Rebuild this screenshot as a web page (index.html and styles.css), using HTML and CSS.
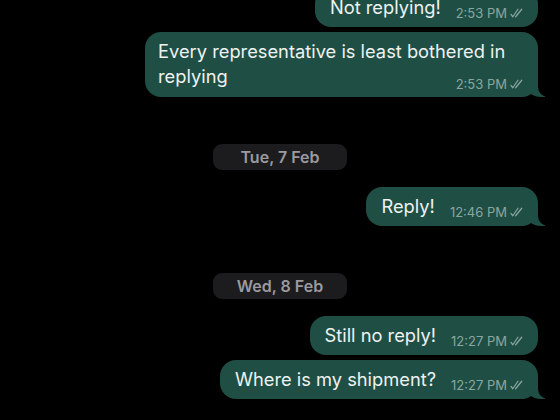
FILE: index.html
```html
<!DOCTYPE html>
<html lang="en">
<head>
    <meta charset="UTF-8">
    <meta name="viewport" content="width=device-width, initial-scale=1.0">
    <title>Chat</title>
    <link rel="stylesheet" href="styles.css">
</head>
<body>
    <div class="chat">
        <div class="bubble first">
            <span class="text">Not replying!</span>
            <span class="meta">2:53 PM <svg class="ticks" viewBox="0 0 16 10"><path d="M1 6.5l2 2.5L8.5 1M6 9l6.5-8"/></svg></span>
        </div>
        <div class="bubble multi tail">
            <span class="text">Every representative is least bothered in replying</span>
            <span class="meta">2:53 PM <svg class="ticks" viewBox="0 0 16 10"><path d="M1 6.5l2 2.5L8.5 1M6 9l6.5-8"/></svg></span>
        </div>

        <div class="date">Tue, 7 Feb</div>

        <div class="bubble tail">
            <span class="text">Reply!</span>
            <span class="meta">12:46 PM <svg class="ticks" viewBox="0 0 16 10"><path d="M1 6.5l2 2.5L8.5 1M6 9l6.5-8"/></svg></span>
        </div>

        <div class="date">Wed, 8 Feb</div>

        <div class="bubble">
            <span class="text">Still no reply!</span>
            <span class="meta">12:27 PM <svg class="ticks" viewBox="0 0 16 10"><path d="M1 6.5l2 2.5L8.5 1M6 9l6.5-8"/></svg></span>
        </div>
        <div class="bubble tail">
            <span class="text">Where is my shipment?</span>
            <span class="meta">12:27 PM <svg class="ticks" viewBox="0 0 16 10"><path d="M1 6.5l2 2.5L8.5 1M6 9l6.5-8"/></svg></span>
        </div>
    </div>
</body>
</html>
```

FILE: styles.css
```css
body {
    margin: 0;
    background-color: #000;
    font-family: Inter, "Liberation Sans", Arial, sans-serif;
    height: 420px;
    overflow: hidden;
}

.chat {
    display: flex;
    flex-direction: column;
    align-items: flex-end;
    padding-right: 22px;
    margin-top: -12px;
}

.bubble {
    position: relative;
    display: flex;
    align-items: flex-end;
    gap: 15px;
    background-color: #1f4e45;
    color: #eef2f0;
    border-radius: 16px;
    padding: 7px 13px 7px 15px;
    font-size: 18.3px;
    line-height: 25px;
    margin-top: 5px;
}

.bubble.first {
    margin-top: 0;
}

/* two-line bubble: time floats at the end of the last line */
.bubble.multi {
    display: flow-root;
    width: 367px;
    padding: 7px 13px 8px 13px;
}

.bubble.multi .meta {
    float: right;
    margin-top: 13px;
    margin-bottom: -13px;
}

.tail::before {
    content: "";
    position: absolute;
    right: -7px;
    bottom: 0;
    width: 20px;
    height: 18px;
    background-color: #1f4e45;
    border-bottom-left-radius: 16px 14px;
}

.tail::after {
    content: "";
    position: absolute;
    right: -10px;
    bottom: 0;
    width: 10px;
    height: 18px;
    background-color: #000;
    border-bottom-left-radius: 10px;
}

.text {
    position: relative;
    z-index: 1;
}

.meta {
    position: relative;
    z-index: 1;
    display: flex;
    align-items: center;
    gap: 3px;
    font-size: 13px;
    line-height: 14px;
    color: #8ba69f;
    white-space: nowrap;
}

.ticks {
    width: 15px;
    height: 10px;
    fill: none;
    stroke: #8ba69f;
    stroke-width: 1.3;
    stroke-linecap: round;
    stroke-linejoin: round;
}

.date {
    align-self: center;
    width: 134px;
    height: 26px;
    line-height: 26px;
    text-align: center;
    border-radius: 9px;
    background-color: #1c1c1f;
    color: #9a9a9f;
    font-size: 16px;
    font-weight: 600;
    margin: 47px 0 17px 22px;
}

.date + .bubble {
    margin-top: 0;
}
```
